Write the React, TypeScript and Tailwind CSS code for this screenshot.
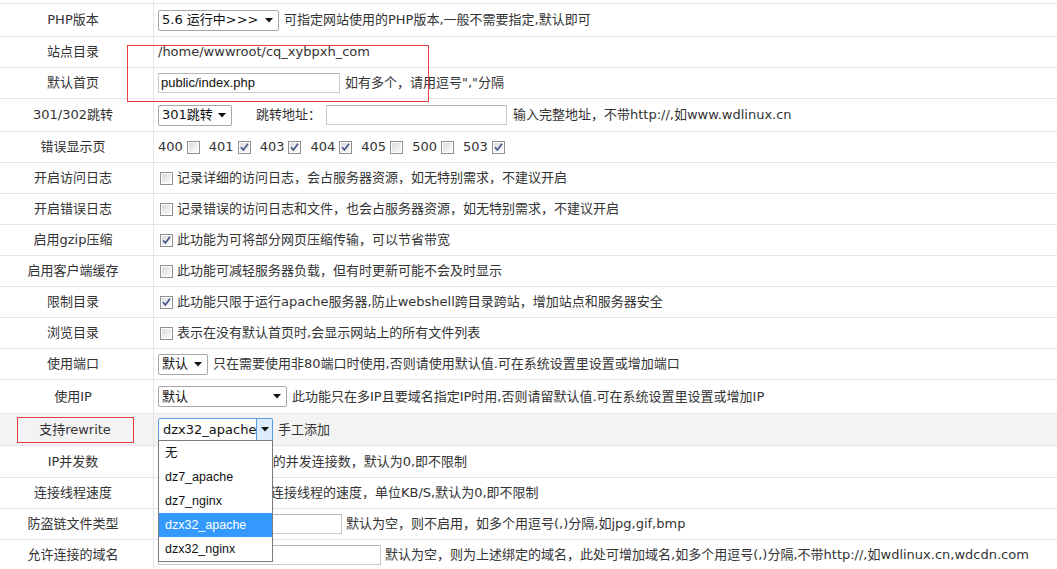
import type { ReactNode } from 'react';

const LINE = 'border-b border-[#e4e4ea]';

function Arrow() {
  return (
    <svg width="8" height="5" viewBox="0 0 8 5" aria-hidden="true">
      <path d="M0 0 L8 0 L4 4.5 Z" fill="#111" />
    </svg>
  );
}

function Select({ value, className }: { value: string; className: string }) {
  return (
    <div
      className={`flex h-[21px] shrink-0 items-center justify-between rounded-[2px] border border-[#a6a6a6] bg-white pl-[3px] pr-[5px] text-[#111] ${className}`}
    >
      <span>{value}</span>
      <Arrow />
    </div>
  );
}

function Input({ value, className }: { value?: string; className: string }) {
  return (
    <div
      className={`flex h-[20px] shrink-0 items-center rounded-[1px] border border-[#c9c9c9] border-t-[#b5b5b5] bg-white pl-[2px] font-['Liberation_Sans',sans-serif] text-[13px] text-[#111] ${className}`}
    >
      {value}
    </div>
  );
}

function Check({ on }: { on?: boolean }) {
  return (
    <svg width="13" height="13" viewBox="0 0 13 13" className="shrink-0" aria-hidden="true">
      <defs>
        <linearGradient id="cbg" x1="0" y1="0" x2="1" y2="1">
          <stop offset="0" stopColor="#dcdcdc" />
          <stop offset="1" stopColor="#fbfbfb" />
        </linearGradient>
      </defs>
      <rect x="0.5" y="0.5" width="12" height="12" fill="#fff" stroke="#8e8f8f" />
      <rect x="2" y="2" width="9" height="9" fill="url(#cbg)" />
      {on && <path d="M3 6.2 L5.4 9 L10 2.8" fill="none" stroke="#44568a" strokeWidth="1.7" />}
    </svg>
  );
}

function Row({
  label,
  h,
  gray,
  children,
}: {
  label: ReactNode;
  h: string;
  gray?: boolean;
  children?: ReactNode;
}) {
  return (
    <div className={`flex ${h} ${LINE} ${gray ? 'bg-[#f3f3f3]' : ''}`}>
      <div className="flex w-[154px] shrink-0 items-center justify-center border-r border-[#e4e4ea] pr-[7px]">
        {label}
      </div>
      <div className="flex min-w-0 flex-1 items-center whitespace-nowrap pl-[4px]">{children}</div>
    </div>
  );
}

function CheckText({ on, text }: { on?: boolean; text: string }) {
  return (
    <>
      <span className="ml-[2px] flex">
        <Check on={on} />
      </span>
      <span className="ml-[4px]">{text}</span>
    </>
  );
}

const codes: [string, boolean][] = [
  ['400', false],
  ['401', true],
  ['403', true],
  ['404', true],
  ['405', false],
  ['500', false],
  ['503', true],
];

const rewriteOptions = ['无', 'dz7_apache', 'dz7_nginx', 'dzx32_apache', 'dzx32_nginx'];

export default function App() {
  return (
    <div className="relative h-[569px] w-full overflow-hidden bg-white font-['DejaVu_Sans','Noto_Sans_CJK_SC',sans-serif] text-[13px] text-[#333]">
      <div className={`h-[4px] ${LINE}`}>
        <div className="ml-[153px] h-full w-px bg-[#e4e4ea]" />
      </div>

      <Row label="PHP版本" h="h-[33px]">
        <Select value="5.6 运行中>>>" className="w-[121px]" />
        <span className="ml-[5px]">可指定网站使用的PHP版本,一般不需要指定,默认即可</span>
      </Row>

      <Row label="站点目录" h="h-[31px]">
        <span className="-mt-[1px]">/home/wwwroot/cq_xybpxh_com</span>
      </Row>

      <Row label="默认首页" h="h-[31px]">
        <Input value="public/index.php" className="w-[182px]" />
        <span className="ml-[5px]">如有多个，请用逗号","分隔</span>
      </Row>

      <Row label="301/302跳转" h="h-[33px]">
        <Select value="301跳转" className="w-[74px]" />
        <span className="ml-[24px]">跳转地址：</span>
        <Input className="ml-[5px] w-[181px]" />
        <span className="ml-[6px]">输入完整地址，不带http://,如www.wdlinux.cn</span>
      </Row>

      <Row label="错误显示页" h="h-[31px]">
        {codes.map(([code, on]) => (
          <span key={code} className="mr-[9px] flex items-center">
            <span>{code}</span>
            <span className="ml-[4px] flex">
              <Check on={on} />
            </span>
          </span>
        ))}
      </Row>

      <Row label="开启访问日志" h="h-[31px]">
        <CheckText text="记录详细的访问日志，会占服务器资源，如无特别需求，不建议开启" />
      </Row>
      <Row label="开启错误日志" h="h-[31px]">
        <CheckText text="记录错误的访问日志和文件，也会占服务器资源，如无特别需求，不建议开启" />
      </Row>
      <Row label="启用gzip压缩" h="h-[31px]">
        <CheckText on text="此功能为可将部分网页压缩传输，可以节省带宽" />
      </Row>
      <Row label="启用客户端缓存" h="h-[31px]">
        <CheckText text="此功能可减轻服务器负载，但有时更新可能不会及时显示" />
      </Row>
      <Row label="限制目录" h="h-[31px]">
        <CheckText on text="此功能只限于运行apache服务器,防止webshell跨目录跨站，增加站点和服务器安全" />
      </Row>
      <Row label="浏览目录" h="h-[31px]">
        <CheckText text="表示在没有默认首页时,会显示网站上的所有文件列表" />
      </Row>

      <Row label="使用端口" h="h-[31px]">
        <Select value="默认" className="w-[50px]" />
        <span className="ml-[5px]">只在需要使用非80端口时使用,否则请使用默认值.可在系统设置里设置或增加端口</span>
      </Row>

      <Row label="使用IP" h="h-[34px]">
        <Select value="默认" className="w-[129px]" />
        <span className="ml-[5px]">此功能只在多IP且要域名指定IP时用,否则请留默认值.可在系统设置里设置或增加IP</span>
      </Row>

      <Row
        gray
        label={
          <div className="ml-[4px] flex h-[26px] w-[117px] items-center justify-center border border-[#e2403f]">
            支持rewrite
          </div>
        }
        h="h-[32px]"
      >
        <div className="relative z-10 flex h-[23px] w-[115px] shrink-0 items-center rounded-[2px] border border-[#569de5] bg-white text-[#111]">
          <span className="flex-1 overflow-hidden pl-[4px]">dzx32_apache</span>
          <span className="flex h-full w-[16px] items-center justify-center border-l border-[#569de5] bg-[#dcecfc]">
            <Arrow />
          </span>
          <div className="absolute left-[-1px] top-[21px] w-[115px] border border-[#7a7a7a] bg-white font-['Liberation_Sans','Noto_Sans_CJK_SC',sans-serif] text-[12.5px] text-[#111]">
            {rewriteOptions.map((opt) => (
              <div
                key={opt}
                className={`flex h-[24px] items-center pl-[6px] ${opt === 'dzx32_apache' ? 'bg-[#3399ff] text-white' : ''}`}
              >
                {opt}
              </div>
            ))}
          </div>
        </div>
        <span className="ml-[5px]">手工添加</span>
      </Row>

      <Row label="IP并发数" h="h-[32px]">
        <Input className="w-[49px]" />
        <span className="ml-[2px]">限制每个IP的并发连接数，默认为0,即不限制</span>
      </Row>

      <Row label="连接线程速度" h="h-[31px]">
        <Input className="w-[59px]" />
        <span className="ml-[2px]">限制每个连接线程的速度，单位KB/S,默认为0,即不限制</span>
      </Row>

      <Row label="防盗链文件类型" h="h-[31px]">
        <Input className="w-[184px]" />
        <span className="ml-[4px]">默认为空，则不启用，如多个用逗号(,)分隔,如jpg,gif,bmp</span>
      </Row>

      <Row label="允许连接的域名" h="h-[31px]">
        <Input className="w-[223px]" />
        <span className="ml-[4px]">
          默认为空，则为上述绑定的域名，此处可增加域名,如多个用逗号(,)分隔,不带http://,如wdlinux.cn,wdcdn.com
        </span>
      </Row>

      <div className="pointer-events-none absolute left-[127px] top-[45px] h-[57px] w-[302px] border border-[#e2403f]" />
    </div>
  );
}
